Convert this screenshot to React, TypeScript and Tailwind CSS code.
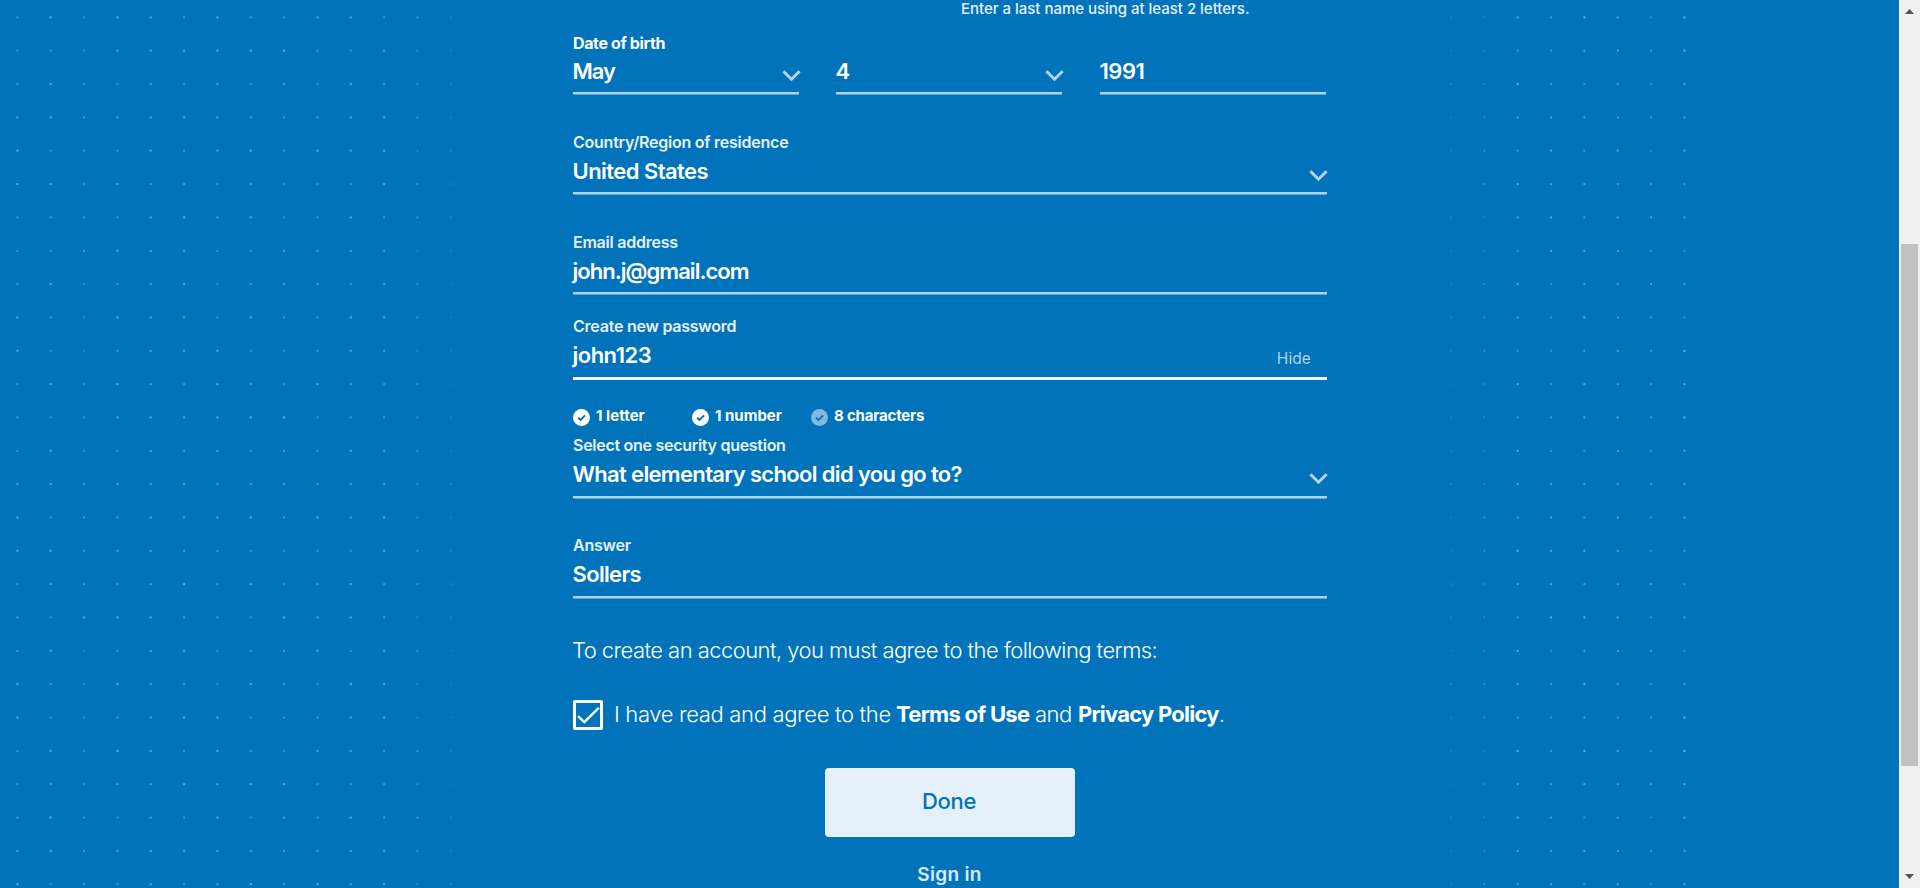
import type { ReactNode } from "react";

const PITCH = 33.34;
const DOT_COLUMNS = [
  { column: 0, fade: 1 }, { column: 1, fade: 1 }, { column: 2, fade: 0.75 }, { column: 3, fade: 1 },
  { column: 4, fade: 1 }, { column: 5, fade: 1 }, { column: 6, fade: 1 }, { column: 7, fade: 0.95 },
  { column: 8, fade: 0.9 }, { column: 9, fade: 0.9 }, { column: 10, fade: 1 }, { column: 11, fade: 0.95 },
  { column: 12, fade: 0.65 }, { column: 13, fade: 0.28 }, { column: 14, fade: 0.07 },
  { column: 42, fade: 0.08 }, { column: 43, fade: 0.28 }, { column: 44, fade: 0.55 }, { column: 45, fade: 1 },
  { column: 46, fade: 0.9 }, { column: 47, fade: 1 }, { column: 48, fade: 0.95 }, { column: 49, fade: 0.8 },
  { column: 50, fade: 1 },
];
const DOT_ROWS = Array.from({ length: 27 }, (_, i) => i);

function DotBackdrop() {
  return (
    <svg className="pointer-events-none absolute inset-0" width="1899" height="888" fill="#cfe6f7" aria-hidden="true">
      {DOT_COLUMNS.map(({ column, fade }) =>
        DOT_ROWS.map((row) => {
          const twinkle = 0.32 + (((column * 7 + row * 13 + column * row * 5) % 11) / 11) * 0.24;
          return (
            <circle
              key={`${column}-${row}`}
              cx={17.4 + column * PITCH}
              cy={17.4 + row * PITCH}
              r="1.15"
              opacity={twinkle * fade}
            />
          );
        }),
      )}
    </svg>
  );
}

function Chevron({ offset = "-mr-[2px]" }: { offset?: string }) {
  return (
    <svg className={`mt-[9px] shrink-0 ${offset}`} width="19" height="12" viewBox="0 0 19 12" fill="none" stroke="#b3d5eb" strokeWidth="3">
      <path d="M1.4 1.2 L9.5 9.2 L17.6 1.2" />
    </svg>
  );
}

type FieldProps = {
  label?: string;
  labelClass?: string;
  value: string;
  valueClass: string;
  className?: string;
  padClass?: string;
  focused?: boolean;
  children?: ReactNode;
};

function Field({ label, labelClass = "leading-[19px] font-semibold tracking-[-0.24px] text-white/90", value, valueClass, className = "", padClass = "pb-[8px]", focused = false, children }: FieldProps) {
  return (
    <div className={`flex flex-col ${className}`}>
      <div className={`h-5 whitespace-nowrap text-[16px] ${labelClass}`}>{label}</div>
      <div className={`mt-1 flex items-center justify-between ${padClass}`}>
        <span className={`-ml-[0.5px] whitespace-nowrap text-[22px] font-semibold leading-7 ${valueClass}`}>{value}</span>
        {children}
      </div>
      {focused ? (
        <div className="h-[3px] bg-white" />
      ) : (
        <div className="h-[3px] border-b border-[#5aa4d3] bg-[#b0d3ea]" />
      )}
    </div>
  );
}

function Rule({ text, spacing, dim = false }: { text: string; spacing: string; dim?: boolean }) {
  return (
    <div className="flex h-[17px] w-[119px] items-center">
      <svg className="mr-[6px] shrink-0" width="17" height="17" viewBox="0 0 17 17">
        <circle cx="8.5" cy="8.5" r="8.5" fill={dim ? "#80b9dd" : "#ffffff"} />
        <path d="M5.1 8.8 L7.5 11 L12.1 6.4" fill="none" stroke="#0073bb" strokeWidth="1.9" />
      </svg>
      <span className={`-mt-[5px] whitespace-nowrap text-[15px] font-bold leading-[17px] ${spacing}`}>{text}</span>
    </div>
  );
}

function Scrollbar() {
  return (
    <div className="flex h-full w-[21px] shrink-0 flex-col items-center bg-[#f0f0f0]">
      <svg className="mt-[9px]" width="9" height="5" viewBox="0 0 9 5" fill="#505050"><path d="M4.5 0 L9 5 H0 Z" /></svg>
      <div className="mt-[230px] h-[522px] w-[17px] bg-[#c1c1c1]" />
      <svg className="mt-[108px]" width="9" height="5" viewBox="0 0 9 5" fill="#505050"><path d="M0 0 H9 L4.5 5 Z" /></svg>
    </div>
  );
}

export default function App() {
  return (
    <div className="flex h-[888px] w-[1920px] overflow-hidden bg-[#0073bb] font-['Inter',sans-serif] text-white">
      <main className="relative flex w-[1899px] shrink-0 flex-col">
        <DotBackdrop />
        <form className="relative ml-[573px] flex w-[754px] flex-col">
          <p className="ml-[388px] h-[18px] whitespace-nowrap text-[15px] font-medium leading-[17px] tracking-[-0.02px] text-white/90">
            Enter a last name using at least 2 letters.
          </p>

          <div className="mt-[15px] grid grid-cols-[226px_227px_226px] gap-x-[37px]">
            <Field label="Date of birth" labelClass="leading-[21px] font-bold tracking-[-0.38px]" value="May" valueClass="tracking-[-1px]" padClass="pb-[7px]"><Chevron /></Field>
            <Field className="w-[226px]" value="4" valueClass="" padClass="pb-[7px]"><Chevron /></Field>
            <Field value="1991" valueClass="tracking-[-0.5px]" padClass="pb-[7px]" />
          </div>

          <Field className="mt-[38px]" padClass="pb-[7px]" label="Country/Region of residence" value="United States" valueClass="tracking-[-0.55px]"><Chevron offset="-mr-px" /></Field>
          <Field className="mt-[38px]" padClass="pb-[7px]" label="Email address" value="john.j@gmail.com" valueClass="tracking-[-0.97px]" />
          <Field className="mt-[22px]" label="Create new password" value="john123" valueClass="tracking-[-0.5px]" focused>
            <button type="button" className="mr-[16px] mt-[8px] text-[15.5px] leading-[18px] tracking-[0.1px] text-white/70">Hide</button>
          </Field>

          <div className="mt-[29px] flex">
            <Rule text="1 letter" spacing="tracking-[0.05px]" />
            <Rule text="1 number" spacing="tracking-[0px]" />
            <Rule text="8 characters" spacing="tracking-[-0.18px]" dim />
          </div>

          <Field className="mt-[10px]" label="Select one security question" labelClass="leading-[19px] font-semibold tracking-[-0.28px] text-white/90" value="What elementary school did you go to?" valueClass="tracking-[-0.66px]"><Chevron offset="-mr-px" /></Field>
          <Field className="mt-[37px]" label="Answer" value="Sollers" valueClass="tracking-[-0.65px]" />

          <p className="-ml-px mt-[37px] h-7 whitespace-nowrap text-[22px] font-light leading-7 tracking-[-0.56px]">
            To create an account, you must agree to the following terms:
          </p>

          <div className="mt-[36px] flex h-[30px] items-center">
            <span className="flex size-[30px] shrink-0 items-center justify-center rounded-[2px] border-[3px] border-white">
              <svg width="24" height="24" viewBox="0 0 24 24" fill="none" stroke="#ffffff" strokeWidth="2.4"><path d="M2 13.2 L8.3 19.2 L22.8 4.8" /></svg>
            </span>
            <p className="-mt-[2px] ml-[11px] flex whitespace-pre text-[22px] font-light leading-7">
              <span className="w-[282px] tracking-[-0.34px]">I have read and agree to the</span>
              <a className="w-[139px] font-bold tracking-[-0.7px]">Terms of Use</a>
              <span className="w-[43px] tracking-[-0.5px]">and</span>
              <a className="font-bold tracking-[-0.76px]">Privacy Policy</a>
              <span>.</span>
            </p>
          </div>

          <button type="button" className="mt-[38px] flex h-[69px] w-[250px] justify-center self-center rounded-[4px] bg-[#e4f0f8] pr-[2px] pt-[19px] text-[22px] font-medium leading-7 tracking-[-0.3px] text-[#0073bb]">
            Done
          </button>
          <a className="mt-[26px] h-6 self-center whitespace-nowrap pr-px text-[19px] font-semibold leading-6 tracking-[0.3px] text-white/85">Sign in</a>
        </form>
      </main>
      <Scrollbar />
    </div>
  );
}
